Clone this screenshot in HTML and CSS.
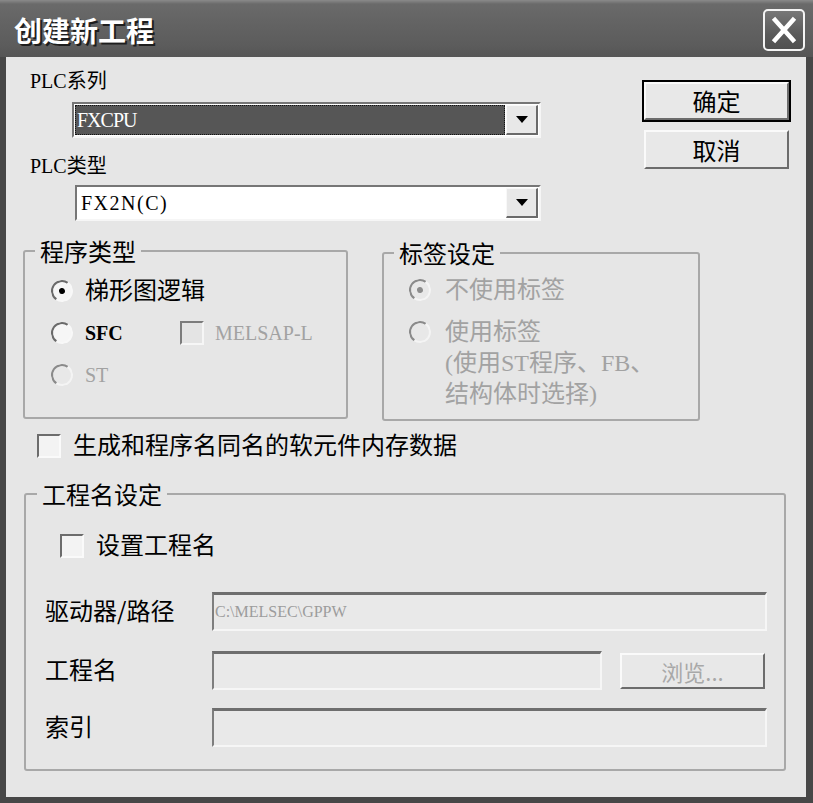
FILE: index.html
```html
<!DOCTYPE html>
<html lang="zh-CN">
<head>
<meta charset="utf-8">
<title>创建新工程</title>
<link rel="stylesheet" href="styles.css">
</head>
<body>
<div class="window">
  <div class="titlebar">
    <span class="title">创建新工程</span>
    <div class="close">
      <svg width="42" height="42" viewBox="0 0 42 42">
        <rect x="1" y="1" width="40" height="40" rx="4" ry="4" fill="none" stroke="#f4f4f4" stroke-width="2"/>
        <path d="M12 11 L30 31 M30 11 L12 31" stroke="#fff" stroke-width="4.5" stroke-linecap="square"/>
      </svg>
    </div>
  </div>
  <div class="client">
    <div class="top">
      <div class="plc">
        <div class="lbl">PLC系列</div>
        <div class="combo combo1">
          <div class="value selected"><span>FXCPU</span></div>
          <div class="drop"><svg width="12" height="7" viewBox="0 0 12 7"><polygon points="0,0 12,0 6,7" fill="#000"/></svg></div>
        </div>
        <div class="lbl lbl2">PLC类型</div>
        <div class="combo combo2">
          <div class="value"><span>FX2N(C)</span></div>
          <div class="drop"><svg width="12" height="7" viewBox="0 0 12 7"><polygon points="0,0 12,0 6,7" fill="#000"/></svg></div>
        </div>
      </div>
      <div class="buttons">
        <div class="btn default">确定</div>
        <div class="btn">取消</div>
      </div>
    </div>

    <div class="groups">
      <fieldset class="group g1">
        <legend>程序类型</legend>
        <div class="opts">
          <div class="row"><span class="radio checked"></span><span class="txt">梯形图逻辑</span></div>
          <div class="row"><span class="radio-item"><span class="radio"></span><span class="txt latin bold">SFC</span></span><span class="cb disabled"></span><span class="txt latin dim">MELSAP-L</span></div>
          <div class="row"><span class="radio disabled"></span><span class="txt latin dim">ST</span></div>
        </div>
      </fieldset>
      <fieldset class="group g2">
        <legend>标签设定</legend>
        <div class="opts">
          <div class="row"><span class="radio disabled checked"></span><span class="txt dim">不使用标签</span></div>
          <div class="row multi"><span class="radio disabled"></span><span class="txt dim lines">使用标签<br>(使用ST程序、FB、<br>结构体时选择)</span></div>
        </div>
      </fieldset>
    </div>

    <div class="checkrow mainchk"><span class="cb"></span><span class="txt">生成和程序名同名的软元件内存数据</span></div>

    <fieldset class="group g3">
      <legend>工程名设定</legend>
      <div class="checkrow projchk"><span class="cb"></span><span class="txt">设置工程名</span></div>
      <div class="form">
        <div class="frow"><span class="flbl">驱动器/路径</span><div class="field wide"><span class="path">C:\MELSEC\GPPW</span></div></div>
        <div class="frow r2"><span class="flbl">工程名</span><div class="field mid"></div><div class="btn browse">浏览...</div></div>
        <div class="frow r3"><span class="flbl">索引</span><div class="field wide"></div></div>
      </div>
    </fieldset>
  </div>
</div>
</body>
</html>
```

FILE: styles.css
```css
html, body {
  margin: 0;
  padding: 0;
  background: #ffffff;
}

body {
  font-family: "Liberation Serif", "Noto Sans CJK SC", serif;
  color: #000;
}

.window {
  width: 813px;
  height: 803px;
  background: #474747;
  display: flex;
  flex-direction: column;
  box-sizing: border-box;
}

.titlebar {
  height: 57px;
  flex: none;
  display: flex;
  align-items: center;
  padding: 2px 8px 0 14px;
  box-sizing: border-box;
  background: linear-gradient(#8a8a8a 0px, #6a6a6a 4px, #646464 20px, #5c5c5c 45px, #555 57px);
}

.title {
  font-family: "Noto Sans CJK SC", sans-serif;
  font-weight: bold;
  font-size: 28px;
  line-height: 34px;
  color: #fff;
  text-shadow: 2px 2px 0 #1e1e1e;
}

.close {
  margin-left: auto;
  width: 42px;
  height: 42px;
  border-radius: 5px;
  background: linear-gradient(#7a7a7a, #5a5a5a 60%, #4e4e4e);
}

.close svg {
  display: block;
}

.client {
  flex: 1;
  margin: 0 7px 6px 6px;
  background: #e6e6e6;
  font-size: 24px;
}

/* top section */
.top {
  display: flex;
}

.plc {
  padding: 11px 0 0 24px;
}

.lbl {
  height: 26px;
  line-height: 26px;
  font-size: 20px;
}

.lbl2 {
  margin-top: 15px;
}

.combo {
  display: flex;
  box-sizing: border-box;
  height: 36px;
  border: 2px solid;
  border-color: #767676 #f6f6f6 #f6f6f6 #767676;
  background: #fff;
  padding: 1px;
  gap: 1px;
}

.combo1 {
  margin: 8px 0 0 42px;
  width: 469px;
}

.combo2 {
  margin: 6px 0 0 45px;
  width: 466px;
}

.value {
  flex: 1;
  display: flex;
  align-items: center;
  font-size: 20px;
  padding-left: 3px;
  box-sizing: border-box;
}

.combo2 .value {
  letter-spacing: 1.5px;
}

.value.selected {
  background: #565656;
  color: #fff;
  border: 1px dotted #111;
  padding-left: 1px;
  letter-spacing: -1px;
}

.drop {
  width: 32px;
  box-sizing: border-box;
  background: #e8e8e8;
  border: 1px solid;
  border-color: #f8f8f8 #6a6a6a #6a6a6a #f8f8f8;
  border-right-width: 2px;
  border-bottom-width: 2px;
  display: flex;
  align-items: center;
  justify-content: center;
}

.drop svg {
  display: block;
}

.buttons {
  margin-left: auto;
  padding: 24px 17px 0 0;
  display: flex;
  flex-direction: column;
  gap: 10px;
}

.btn {
  width: 145px;
  height: 39px;
  box-sizing: border-box;
  background: #e8e8e8;
  border: 2px solid;
  border-color: #fafafa #6c6c6c #6c6c6c #fafafa;
  display: flex;
  align-items: center;
  justify-content: center;
  font-family: "Noto Sans CJK SC", sans-serif;
  font-size: 24px;
  line-height: 1;
}

.btn.default {
  outline: 2px solid #000;
  outline-offset: 0;
  height: 38px;
  margin-top: 1px;
}

/* groups */
.groups {
  display: flex;
  align-items: flex-start;
  gap: 34px;
  margin: 17px 0 0 17px;
}

.group {
  margin: 0;
  padding: 0;
  min-width: 0;
  box-sizing: border-box;
  border: 2px solid #a8a8a8;
  border-radius: 3px;
}

.group legend {
  padding: 0 5px;
  margin-left: 10px;
  font-family: "Noto Sans CJK SC", sans-serif;
  font-size: 24px;
  line-height: 26px;
}

.g1 {
  width: 325px;
  height: 181px;
}

.g2 {
  width: 318px;
  height: 181px;
  margin-top: 2px;
}

.opts {
  display: flex;
  flex-direction: column;
}

.g1 .opts {
  padding: 6px 0 0 26px;
}

.g2 .opts {
  padding: 3px 0 0 25px;
}

.row {
  height: 42px;
  display: flex;
  align-items: center;
}

.row .txt {
  margin-left: 12px;
}

.g2 .row .txt {
  margin-left: 14px;
}

.row.multi {
  align-items: flex-start;
  padding-top: 6px;
}

.row.multi .radio {
  margin-top: 4px;
}

.txt {
  font-size: 24px;
  line-height: 26px;
  white-space: nowrap;
}

.txt.latin {
  font-size: 20px;
}

.txt.bold {
  font-weight: bold;
}

.txt.lines {
  line-height: 31px;
}

.dim {
  color: #a2a2a2;
}

.radio-item {
  display: flex;
  align-items: center;
  width: 129px;
}

.radio-item + .cb + .txt {
  margin-left: 11px;
}

.radio {
  flex: none;
  position: relative;
  width: 22px;
  height: 22px;
  box-sizing: border-box;
  border-radius: 50%;
  border: 2px solid;
  border-color: #6a6a6a #f8f8f8 #f8f8f8 #6a6a6a;
  background: #f6f6f6;
  transform: rotate(-10deg);
}

.radio.disabled {
  background: #e8e8e8;
  border-color: #8a8a8a #f4f4f4 #f4f4f4 #8a8a8a;
}

.radio.checked::after {
  content: "";
  position: absolute;
  left: 6px;
  top: 6px;
  width: 6px;
  height: 6px;
  border-radius: 50%;
  background: #000;
}

.radio.disabled.checked::after {
  background: #8c8c8c;
}

.cb {
  flex: none;
  width: 24px;
  height: 24px;
  box-sizing: border-box;
  border: 2px solid;
  border-color: #6c6c6c #fafafa #fafafa #6c6c6c;
  background: #f3f3f3;
}

.cb.disabled {
  background: #e4e4e4;
  border-color: #7c7c7c #f6f6f6 #f6f6f6 #7c7c7c;
}

.checkrow {
  display: flex;
  align-items: center;
  height: 26px;
}

.mainchk {
  margin: 12px 0 0 31px;
  gap: 12px;
}

.g3 {
  margin: 22px 0 0 18px;
  width: 762px;
  height: 290px;
}

.g3 legend {
  margin-left: 11px;
}

.projchk {
  margin: 26px 0 0 34px;
  gap: 12px;
}

.form {
  margin-top: 33px;
  padding-left: 19px;
  display: flex;
  flex-direction: column;
}

.frow {
  display: flex;
  align-items: center;
  height: 39px;
}

.frow.r2 {
  margin-top: 20px;
}

.frow.r3 {
  margin-top: 18px;
}

.flbl {
  width: 167px;
  font-family: "Noto Sans CJK SC", sans-serif;
  font-size: 24px;
  line-height: 26px;
  margin-top: -4px;
}

.field {
  height: 39px;
  box-sizing: border-box;
  border: 2px solid;
  border-top-width: 3px;
  border-color: #6e6e6e #f6f6f6 #f6f6f6 #7e7e7e;
  background: #e9e9e9;
  display: flex;
  align-items: center;
}

.field.wide {
  width: 555px;
}

.field.mid {
  width: 390px;
}

.path {
  font-size: 16px;
  color: #9c9c9c;
  padding-left: 1px;
}

.btn.browse {
  margin-left: 18px;
  height: 36px;
  color: #a8a8a8;
  font-size: 22px;
}
```
